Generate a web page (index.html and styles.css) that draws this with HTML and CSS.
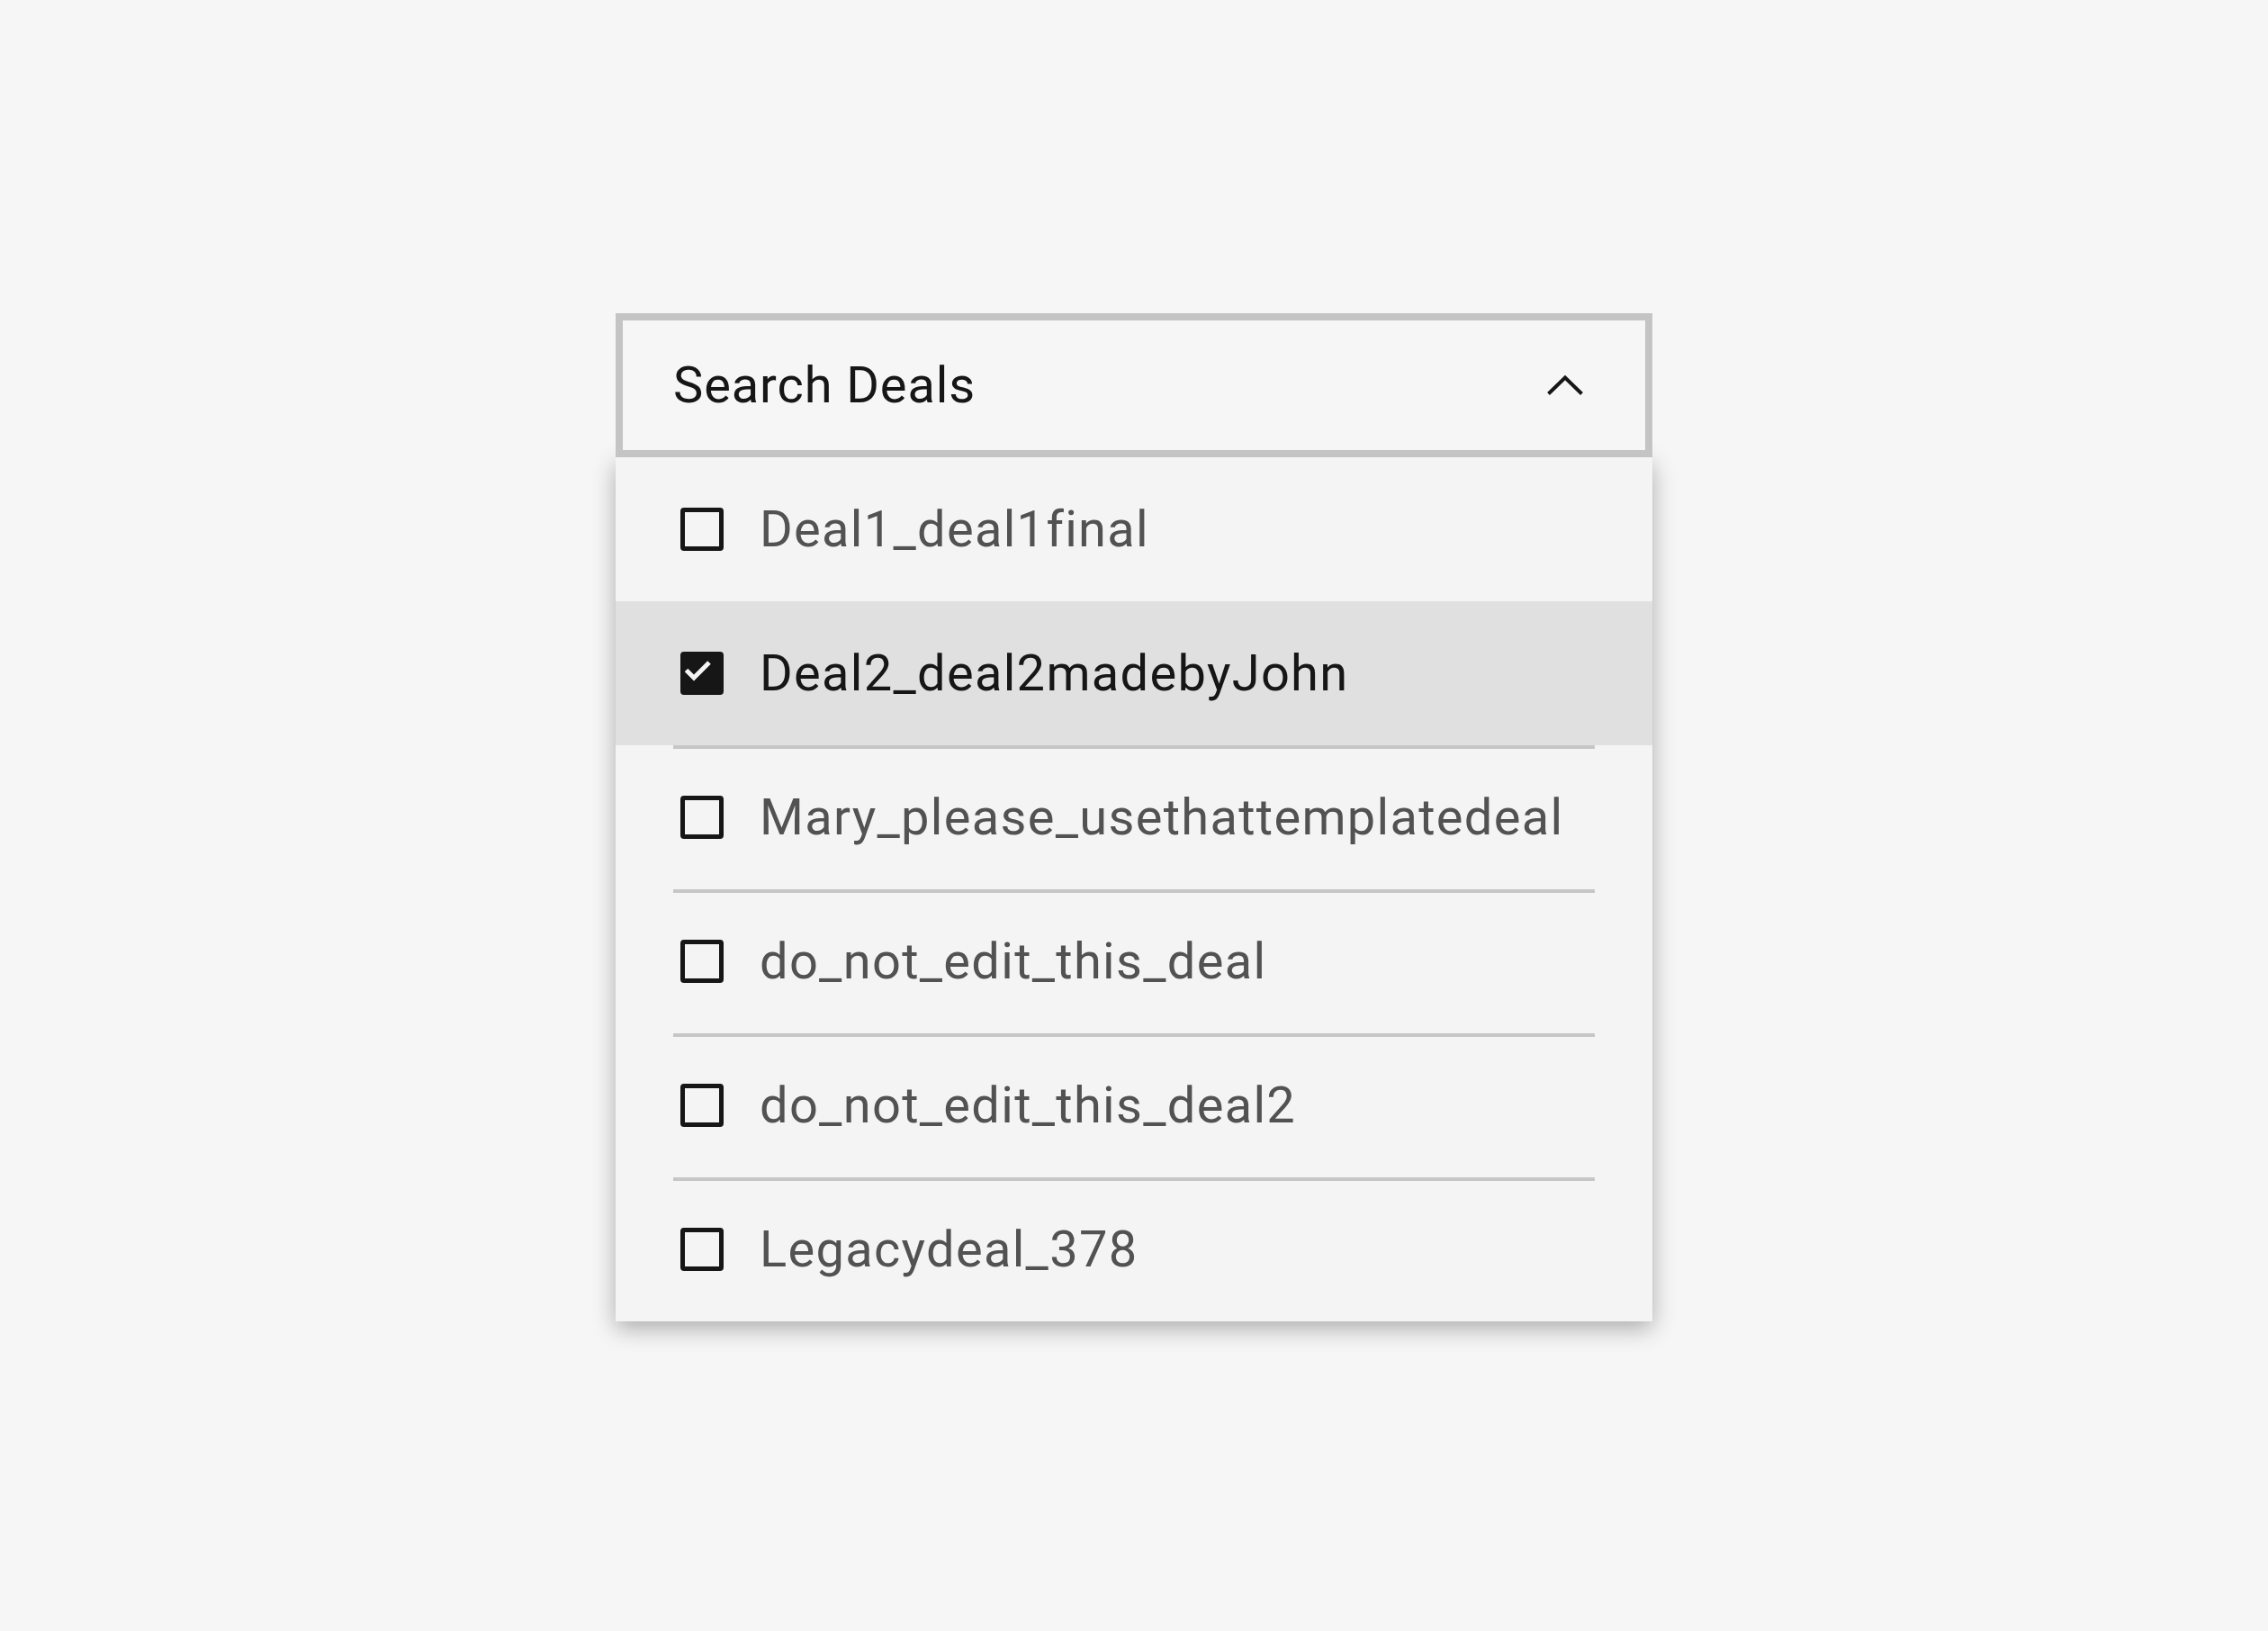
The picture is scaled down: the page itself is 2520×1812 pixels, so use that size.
FILE: index.html
```html
<!DOCTYPE html>
<html lang="en">
<head>
<meta charset="utf-8">
<title>Search Deals</title>
<link rel="stylesheet" href="styles.css">
</head>
<body>
<main class="page">
  <div class="listbox">
    <div class="field">
      <span class="field-label">Search Deals</span>
      <svg class="chevron" width="40" height="22" viewBox="0 0 40 22" aria-hidden="true">
        <polyline points="1.5,20.5 20,2.5 38.5,20.5" fill="none" stroke="#161616" stroke-width="4"/>
      </svg>
    </div>
    <ul class="menu">
      <li class="item">
        <div class="option first">
          <span class="box"></span>
          <span class="label">Deal1_deal1final</span>
        </div>
      </li>
      <li class="item selected">
        <div class="option first">
          <span class="box checked">
            <svg width="48" height="48" viewBox="0 0 48 48" aria-hidden="true"><polyline points="6.5,20.5 15,29 32,12" fill="none" stroke="#f4f4f4" stroke-width="5"/></svg>
          </span>
          <span class="label">Deal2_deal2madebyJohn</span>
        </div>
      </li>
      <li class="item">
        <div class="option">
          <span class="box"></span>
          <span class="label">Mary_please_usethattemplatedeal</span>
        </div>
      </li>
      <li class="item">
        <div class="option">
          <span class="box"></span>
          <span class="label">do_not_edit_this_deal</span>
        </div>
      </li>
      <li class="item">
        <div class="option">
          <span class="box"></span>
          <span class="label">do_not_edit_this_deal2</span>
        </div>
      </li>
      <li class="item">
        <div class="option">
          <span class="box"></span>
          <span class="label">Legacydeal_378</span>
        </div>
      </li>
    </ul>
  </div>
</main>
</body>
</html>
```
FILE: styles.css
```css
* { box-sizing: border-box; }

html, body {
  margin: 0;
  padding: 0;
  background: #f6f6f6;
}

body {
  font-family: Roboto, "Noto Sans", "Liberation Sans", sans-serif;
  color: #161616;
}

.page {
  padding: 348px 0 0 684px;
  min-height: 1812px;
}

.listbox {
  width: 1152px;
}

.field {
  height: 160px;
  border: 8px solid #c4c4c4;
  background: #f6f6f6;
  display: flex;
  align-items: center;
  justify-content: space-between;
  padding: 0 69px 0 56px;
  position: relative;
  z-index: 2;
}

.field-label {
  font-size: 56px;
  letter-spacing: 0.9px;
  color: #161616;
}

.chevron {
  display: block;
  overflow: visible;
}

.menu {
  list-style: none;
  margin: 0;
  padding: 0;
  background: #f4f4f4;
  box-shadow: 0 8px 24px rgba(0, 0, 0, 0.3);
  position: relative;
  z-index: 1;
}

.item {
  padding: 0 64px;
}

.item.selected {
  background: #e0e0e0;
}

.option {
  height: 160px;
  border-top: 4px solid #c6c6c6;
  padding: 0 0 4px 8px;
  display: flex;
  align-items: center;
  gap: 40px;
}

.option.first {
  border-top-color: transparent;
}

.box {
  width: 48px;
  height: 48px;
  flex: none;
  border: 5px solid #161616;
  border-radius: 4px;
  position: relative;
}

.box.checked {
  background: #161616;
}

.box.checked svg {
  display: block;
  margin: -5px;
}

.label {
  font-size: 56px;
  letter-spacing: 1.3px;
  color: #525252;
  white-space: nowrap;
}

.selected .label {
  color: #161616;
}
```
